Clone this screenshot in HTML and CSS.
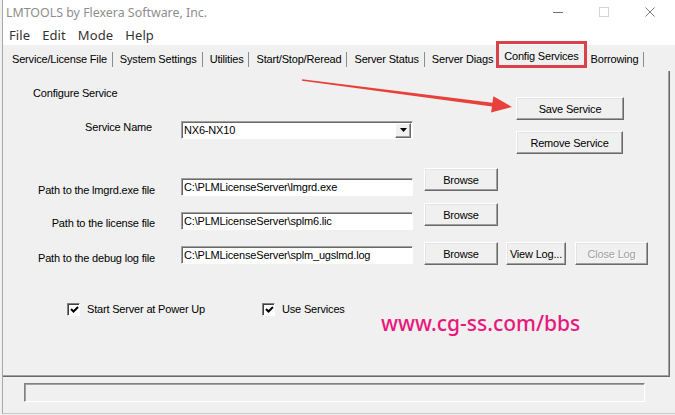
FILE: index.html
```html
<!DOCTYPE html>
<html>
<head>
<meta charset="utf-8">
<title>LMTOOLS</title>
<link rel="stylesheet" href="styles.css">
</head>
<body>
<div class="window">
  <div class="titlebar">
    <span class="title">LMTOOLS by Flexera Software, Inc.</span>
    <div class="controls">
      <span class="ctl"><svg width="10" height="10" viewBox="0 0 10 10"><line x1="0" y1="5.5" x2="10" y2="5.5" stroke="#6f6f6f" stroke-width="1"/></svg></span>
      <span class="ctl"><svg width="10" height="10" viewBox="0 0 10 10"><rect x="0.5" y="0.5" width="9" height="9" fill="none" stroke="#d4d4d4" stroke-width="1"/></svg></span>
      <span class="ctl"><svg width="10" height="10" viewBox="0 0 10 10"><path d="M0.5 0.5 L9.5 9.5 M9.5 0.5 L0.5 9.5" stroke="#7a7a7a" stroke-width="1" fill="none"/></svg></span>
    </div>
  </div>
  <div class="menubar">
    <span class="menu">File</span>
    <span class="menu">Edit</span>
    <span class="menu">Mode</span>
    <span class="menu">Help</span>
  </div>
  <div class="tabs">
    <span class="tab">Service/License File</span>
    <span class="tab">System Settings</span>
    <span class="tab">Utilities</span>
    <span class="tab">Start/Stop/Reread</span>
    <span class="tab">Server Status</span>
    <span class="tab tab-pre">Server Diags</span>
    <span class="tab tab-active">Config Services</span>
    <span class="tab">Borrowing</span>
  </div>
  <div class="panel">
    <div class="top">
      <div class="top-left">
        <div class="heading">Configure Service</div>
        <div class="service-row">
          <span class="label label-service">Service Name</span>
          <div class="select">
            <span class="select-text">NX6-NX10</span>
            <span class="drop"><svg width="7" height="4" viewBox="0 0 7 4"><path d="M0 0 H7 L3.5 4 Z" fill="#000"/></svg></span>
          </div>
        </div>
      </div>
      <div class="top-right">
        <button class="btn btn-save">Save Service</button>
        <button class="btn btn-remove">Remove Service</button>
      </div>
    </div>
    <div class="path-row r1">
      <span class="label">Path to the lmgrd.exe file</span>
      <div class="input">C:\PLMLicenseServer\lmgrd.exe</div>
      <button class="btn browse">Browse</button>
    </div>
    <div class="path-row r2">
      <span class="label">Path to the license file</span>
      <div class="input">C:\PLMLicenseServer\splm6.lic</div>
      <button class="btn browse">Browse</button>
    </div>
    <div class="path-row r3">
      <span class="label">Path to the debug log file</span>
      <div class="input">C:\PLMLicenseServer\splm_ugslmd.log</div>
      <button class="btn browse">Browse</button>
      <button class="btn viewlog">View Log...</button>
      <button class="btn closelog">Close Log</button>
    </div>
    <div class="checks">
      <span class="check check1"><span class="box"><svg width="9" height="9" viewBox="0 0 9 9"><path d="M1 4 L3.5 6.5 L8 2" stroke="#000" stroke-width="2" fill="none"/></svg></span>Start Server at Power Up</span>
      <span class="check"><span class="box"><svg width="9" height="9" viewBox="0 0 9 9"><path d="M1 4 L3.5 6.5 L8 2" stroke="#000" stroke-width="2" fill="none"/></svg></span>Use Services</span>
    </div>
  </div>
  <div class="statusbar">
    <div class="status-box"></div>
  </div>
</div>
<div class="watermark">www.cg-ss.com/bbs</div>
<svg class="arrow" width="675" height="415" viewBox="0 0 675 415">
  <polygon points="302,79.3 492.4,102.8 493.4,96.3 512,107 491,112.5 492,106.4 302,80.7" fill="#e8403a"/>
</svg>
</body>
</html>
```
FILE: styles.css
```css
* { box-sizing: border-box; }
body {
  margin: 0;
  width: 675px;
  height: 415px;
  background: #f0f0f0;
  font-family: "Liberation Sans", Arial, sans-serif;
  font-size: 11px;
  letter-spacing: -0.18px;
  color: #000;
  position: relative;
  overflow: hidden;
}
.window {
  margin-left: 2px;
  border-left: 1px solid #a8a8a8;
  border-bottom: 1px solid #c8c8c8;
  height: 414px;
}
.titlebar {
  height: 24px;
  background: #fff;
  display: flex;
  align-items: center;
  padding-left: 3px;
  font-family: "Noto Sans", sans-serif;
  font-size: 12.4px;
  letter-spacing: 0;
  color: #8e8e8e;
}
.controls {
  margin-left: auto;
  display: flex;
  margin-right: 2px;
}
.ctl {
  width: 46px;
  height: 24px;
  display: flex;
  align-items: center;
  justify-content: center;
}
.menubar {
  height: 21px;
  background: #fff;
  display: flex;
  align-items: center;
  padding-left: 6px;
  gap: 12px;
  font-family: "Noto Sans", sans-serif;
  font-size: 13px;
  letter-spacing: 0.1px;
  color: #333;
}
.tabs {
  height: 26px;
  display: flex;
  align-items: flex-start;
  padding-left: 2px;
}
.tab {
  margin-top: 7px;
  height: 15px;
  line-height: 15px;
  padding: 0 5px 0 7px;
  border-right: 1px solid #8c8c8c;
  white-space: nowrap;
}
.tab-pre { border-right-color: transparent; padding-right: 4px; }
.tab-active {
  position: relative;
  margin-top: 4px;
  padding: 0 5px 0 6px;
  border-right: none;
}
.tab-active::after {
  content: "";
  position: absolute;
  left: -2px;
  right: -3px;
  top: -8px;
  bottom: -4px;
  border: 3px solid #d9424a;
}
.panel {
  height: 306px;
  width: 667px;
  border-right: 1px solid #696969;
  border-bottom: 1px solid #696969;
  box-shadow: inset -1px -1px 0 #a0a0a0;
}
.top { display: flex; }
.top-left { width: 513px; }
.heading {
  margin: 15px 0 0 30px;
  line-height: 14px;
}
.service-row {
  display: flex;
  align-items: flex-start;
  margin-top: 21px;
}
.label {
  width: 152px;
  text-align: right;
  line-height: 14px;
  white-space: nowrap;
}
.label-service { padding-right: 3px; margin-top: -1px; }
.select {
  margin-left: 26px;
  width: 232px;
  height: 18px;
  background: #fff;
  border: 1px solid;
  border-color: #a0a0a0 #fff #fff #a0a0a0;
  box-shadow: inset 1px 1px 0 #696969;
  display: flex;
  align-items: center;
  padding: 0 1px 0 2px;
}
.select-text { flex: 1; }
.drop {
  width: 16px;
  height: 15px;
  background: #f0f0f0;
  border: 1px solid;
  border-color: #fff #696969 #696969 #fff;
  box-shadow: inset -1px -1px 0 #a0a0a0;
  display: flex;
  align-items: center;
  justify-content: center;
}
.top-right {
  display: flex;
  flex-direction: column;
  gap: 11px;
  margin-top: 26px;
}
.btn {
  font-family: "Liberation Sans", Arial, sans-serif;
  font-size: 11px;
  letter-spacing: -0.18px;
  color: #000;
  background: #f0f0f0;
  border: 1px solid;
  border-color: #fff #696969 #696969 #fff;
  box-shadow: inset -1px -1px 0 #a0a0a0, inset 1px 1px 0 #e3e3e3;
  height: 23px;
  padding: 0;
  margin: 0;
}
.btn-save { width: 108px; }
.btn-remove { width: 107px; }
.path-row {
  display: flex;
  align-items: flex-start;
  height: 23px;
}
.input {
  margin-left: 26px;
  width: 232px;
  height: 18px;
  background: #fff;
  border: 1px solid;
  border-color: #a0a0a0 #fff #fff #a0a0a0;
  box-shadow: inset 1px 1px 0 #696969;
  padding-left: 2px;
  line-height: 16px;
  white-space: nowrap;
  overflow: hidden;
}
.browse { margin-left: 11px; width: 74px; }
.viewlog { margin-left: 8px; width: 60px; }
.closelog { margin-left: 9px; width: 73px; color: #a0a0a0; text-shadow: 1px 1px 0 #fff; }
.r1 { margin-top: 14px; }
.r1 .label { margin-top: 15px; }
.r1 .input { margin-top: 10px; }
.r2 { margin-top: 12px; }
.r2 .label { margin-top: 13px; }
.r2 .input { margin-top: 9px; }
.r3 { margin-top: 16px; }
.r3 .label { margin-top: 9px; }
.r3 .input { margin-top: 4px; }
.checks {
  display: flex;
  margin-top: 37px;
  padding-left: 64px;
}
.check {
  display: flex;
  align-items: center;
  gap: 7px;
  line-height: 14px;
}
.check1 { width: 195px; }
.box {
  width: 13px;
  height: 13px;
  background: #fff;
  border: 1px solid;
  border-color: #808080 #fff #fff #808080;
  box-shadow: inset 1px 1px 0 #404040;
  display: flex;
  align-items: center;
  justify-content: center;
  padding: 1px 0 0 1px;
}
.statusbar {
  height: 36px;
  padding-top: 6px;
  padding-left: 21px;
}
.status-box {
  width: 621px;
  height: 19px;
  border: 1px solid;
  border-color: #808080 #fff #fff #808080;
  box-shadow: inset 1px 1px 0 #a0a0a0;
}
.watermark {
  position: absolute;
  left: 381px;
  top: 313px;
  font-family: "Noto Sans", sans-serif;
  font-size: 21px;
  line-height: 21px;
  font-weight: 500;
  letter-spacing: 0;
  color: #e8187c;
  white-space: nowrap;
}
.arrow {
  position: absolute;
  left: 0;
  top: 0;
  pointer-events: none;
}
```
